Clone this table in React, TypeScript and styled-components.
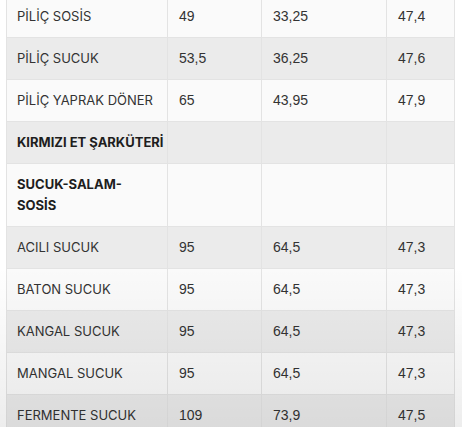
import React from "react";
import styled, { createGlobalStyle } from "styled-components";

const GlobalStyle = createGlobalStyle`
  html, body {
    margin: 0;
    padding: 0;
    background: #ffffff;
  }
`;

const Page = styled.div`
  position: relative;
  height: 427px;
  overflow: hidden;
  padding: 0 8px 0 6px;
`;

const Table = styled.table`
  width: 448px;
  margin-top: -4px;
  border-collapse: collapse;
  table-layout: fixed;
  color: #333333;
`;

const Row = styled.tr<{ $shade: boolean }>`
  background: ${(p) => (p.$shade ? "#ebebeb" : "#fafafa")};
`;

const Cell = styled.td`
  padding: 10px 10px 10px 11px;
  line-height: 21px;
  border: 1px solid #e3e3e3;
  border-top: 0;
  vertical-align: middle;
  font-family: "Liberation Sans", Arial, sans-serif;
  font-size: 14px;
  color: #333333;
`;

const NameCell = styled(Cell)<{ $bold?: boolean }>`
  padding-left: 10px;
  font-family: Inter, "Open Sans", sans-serif;
  font-size: 13px;
  font-weight: ${(p) => (p.$bold ? 700 : 400)};
  color: ${(p) => (p.$bold ? "#1e1e1e" : "#333333")};
  white-space: nowrap;
  overflow: visible;
`;

const NameText = styled.span<{ $wrap?: number }>`
  display: inline-block;
  white-space: ${(p) => (p.$wrap ? "normal" : "nowrap")};
  max-width: ${(p) => (p.$wrap ? `${p.$wrap}px` : "none")};
`;

const Fade = styled.div`
  position: absolute;
  left: 0;
  right: 0;
  bottom: 0;
  height: 160px;
  pointer-events: none;
  background: linear-gradient(to bottom, rgba(0, 0, 0, 0), rgba(0, 0, 0, 0.07));
`;

type Item = {
  name: string;
  a?: string;
  b?: string;
  c?: string;
  bold?: boolean;
  wrap?: number;
};

const items: Item[] = [
  { name: "PİLİÇ SOSİS", a: "49", b: "33,25", c: "47,4" },
  { name: "PİLİÇ SUCUK", a: "53,5", b: "36,25", c: "47,6" },
  { name: "PİLİÇ YAPRAK DÖNER", a: "65", b: "43,95", c: "47,9" },
  { name: "KIRMIZI ET ŞARKÜTERİ", bold: true },
  { name: "SUCUK-SALAM-SOSİS", bold: true, wrap: 110 },
  { name: "ACILI SUCUK", a: "95", b: "64,5", c: "47,3" },
  { name: "BATON SUCUK", a: "95", b: "64,5", c: "47,3" },
  { name: "KANGAL SUCUK", a: "95", b: "64,5", c: "47,3" },
  { name: "MANGAL SUCUK", a: "95", b: "64,5", c: "47,3" },
  { name: "FERMENTE SUCUK", a: "109", b: "73,9", c: "47,5" },
];

export default function App() {
  return (
    <Page>
      <GlobalStyle />
      <Table>
        <colgroup>
          <col style={{ width: 161 }} />
          <col style={{ width: 94 }} />
          <col style={{ width: 125 }} />
          <col style={{ width: 68 }} />
        </colgroup>
        <tbody>
          {items.map((it, i) => (
            <Row key={it.name} $shade={i % 2 === 1}>
              <NameCell $bold={it.bold}>
                <NameText $wrap={it.wrap}>{it.name}</NameText>
              </NameCell>
              <Cell>{it.a ?? ""}</Cell>
              <Cell>{it.b ?? ""}</Cell>
              <Cell>{it.c ?? ""}</Cell>
            </Row>
          ))}
        </tbody>
      </Table>
      <Fade />
    </Page>
  );
}
